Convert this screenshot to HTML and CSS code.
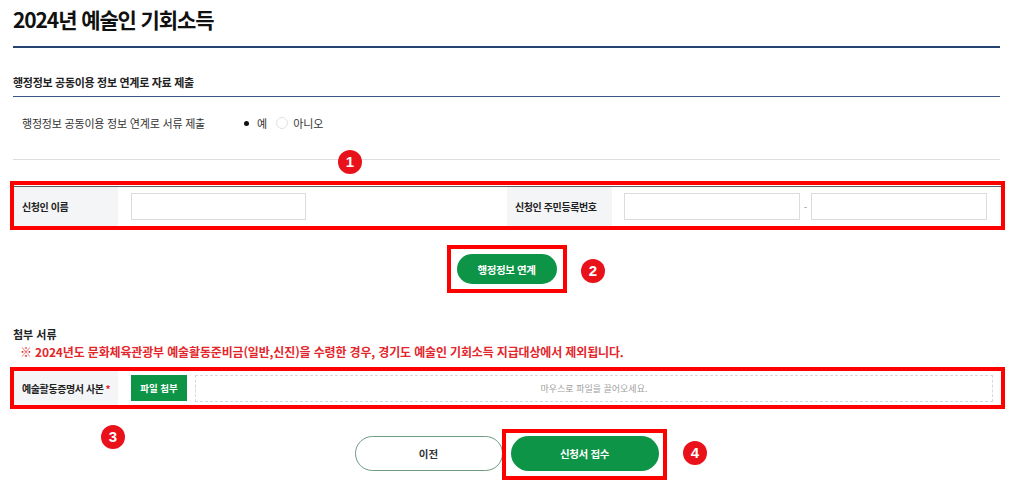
FILE: index.html
```html
<!DOCTYPE html>
<html lang="ko">
<head>
    <meta charset="UTF-8">
    <meta name="viewport" content="width=device-width, initial-scale=1.0">
    <title>2024년 예술인 기회소득</title>
    <link rel="stylesheet" href="styles.css">
</head>
<body>
    <div class="page">
        <h1 class="page-title">2024년 예술인 기회소득</h1>

        <h2 class="section-title">행정정보 공동이용 정보 연계로 자료 제출</h2>
        <div class="agree-row">
            <span class="agree-label">행정정보 공동이용 정보 연계로 서류 제출</span>
            <label class="radio checked"><span class="radio-mark"></span>예</label>
            <label class="radio"><span class="radio-mark"></span>아니오</label>
        </div>

        <div class="hl-box">
            <div class="form-row row-applicant">
                <div class="cell-label">신청인 이름</div>
                <div class="cell-input">
                    <input type="text" class="field">
                </div>
                <div class="cell-label">신청인 주민등록번호</div>
                <div class="cell-input cell-jumin">
                    <input type="text" class="field">
                    <span class="dash">-</span>
                    <input type="text" class="field">
                </div>
            </div>
        </div>

        <div class="center-row">
            <div class="hl-box hl-inline">
                <button class="btn-green btn-small">행정정보 연계</button>
            </div>
        </div>

        <h3 class="attach-title">첨부 서류</h3>
        <p class="notice">※ 2024년도 문화체육관광부 예술활동준비금(일반,신진)을 수령한 경우, 경기도 예술인 기회소득 지급대상에서 제외됩니다.</p>

        <div class="hl-box">
            <div class="form-row row-file">
                <div class="cell-label">예술활동증명서 사본 <span class="req">*</span></div>
                <div class="cell-file">
                    <button class="btn-file">파일 첨부</button>
                    <div class="drop-zone">마우스로 파일을 끌어오세요.</div>
                </div>
            </div>
        </div>

        <div class="bottom-btns">
            <button class="btn-outline">이전</button>
            <div class="hl-over">
                <button class="btn-green btn-big">신청서 접수</button>
            </div>
        </div>

        <span class="badge badge-1">1</span>
        <span class="badge badge-2">2</span>
        <span class="badge badge-3">3</span>
        <span class="badge badge-4">4</span>
    </div>
</body>
</html>
```

FILE: styles.css
```css
* {
    margin: 0;
    padding: 0;
    box-sizing: border-box;
}

body {
    font-family: "Noto Sans CJK KR", "Noto Sans", sans-serif;
    background: #fff;
    color: #222;
}

.page {
    position: relative;
    width: 1024px;
    padding: 0 24px 20px 13px;
}

.page-title {
    font-size: 21px;
    line-height: 30px;
    font-weight: 700;
    letter-spacing: -1.1px;
    color: #111;
    padding: 4px 0 12px;
    border-bottom: 2px solid #26436f;
}

.section-title {
    margin-top: 24px;
    font-size: 11px;
    line-height: 20px;
    font-weight: 700;
    letter-spacing: -0.3px;
    padding-bottom: 4px;
    border-bottom: 1px solid #3b5784;
}

.agree-row {
    display: flex;
    align-items: center;
    padding: 16px 0 26px 9px;
    border-bottom: 1px solid #ddd;
    font-size: 11px;
    line-height: 20px;
    color: #333;
}

.agree-label {
    width: 218px;
    letter-spacing: -0.2px;
}

.radio {
    display: flex;
    align-items: center;
    margin-right: 9px;
}

.radio-mark {
    width: 12px;
    height: 12px;
    border-radius: 50%;
    border: 1px solid #e2e2e2;
    margin-right: 5px;
    position: relative;
}

.radio.checked .radio-mark {
    border-color: #fff;
}

.radio.checked .radio-mark::after {
    content: "";
    position: absolute;
    left: 3px;
    top: 3px;
    width: 5px;
    height: 5px;
    border-radius: 50%;
    background: #111;
}

/* red highlight boxes */
.hl-box {
    border: 4px solid #ff0000;
    margin: 21px -5px 0 -3px;
    padding-top: 1px;
}

.hl-inline {
    display: inline-block;
    margin: 0;
    padding: 5px 6px;
}

.center-row {
    display: flex;
    justify-content: center;
    margin-top: 15px;
}

.form-row {
    display: grid;
    background: #fff;
}

.row-applicant {
    grid-template-columns: 104px minmax(0, 1fr) 105px minmax(0, 1fr);
    height: 40px;
    border-top: 1px solid #5a5f66;
}

.cell-label {
    background: #f4f5f7;
    display: flex;
    align-items: center;
    padding-left: 8px;
    font-size: 10px;
    font-weight: 700;
    letter-spacing: -0.4px;
    color: #222;
}

.cell-input {
    display: flex;
    align-items: center;
    padding-left: 13px;
    min-width: 0;
}

.cell-jumin {
    padding: 0 14px 0 12px;
}

.field {
    width: 175px;
    height: 27px;
    border: 1px solid #dcdcdc;
    background: #fff;
}

.cell-jumin .field {
    flex: 1;
    width: auto;
    min-width: 0;
}

.dash {
    width: 11px;
    text-align: center;
    font-size: 10px;
    color: #999;
}

.btn-green {
    background: #0d9446;
    color: #fff;
    border: none;
    font-family: inherit;
    font-weight: 700;
    letter-spacing: -0.4px;
}

.btn-small {
    display: block;
    width: 100px;
    height: 30px;
    border-radius: 15px;
    font-size: 10.5px;
}

.attach-title {
    margin-top: 32px;
    font-size: 11px;
    line-height: 18px;
    font-weight: 700;
    color: #222;
}

.notice {
    padding-left: 7px;
    font-size: 12px;
    line-height: 18px;
    font-weight: 700;
    letter-spacing: -0.15px;
    color: #e3262b;
}

.notice + .hl-box {
    margin-top: 6px;
    padding-top: 0;
}

.row-file {
    grid-template-columns: 104px minmax(0, 1fr);
    height: 34px;
}

.cell-file {
    display: flex;
    align-items: center;
    padding: 0 8px 0 13px;
    gap: 8px;
}

.btn-file {
    width: 56px;
    height: 26px;
    background: #0d9446;
    color: #fff;
    border: none;
    font-family: inherit;
    font-size: 9.5px;
    font-weight: 700;
}

.drop-zone {
    flex: 1;
    height: 27px;
    border: 1px dashed #d8d8d8;
    display: flex;
    align-items: center;
    justify-content: center;
    font-size: 9px;
    color: #a0a0a0;
}

.req {
    color: #e3262b;
    margin-left: 2px;
}

.bottom-btns {
    display: flex;
    justify-content: center;
    gap: 8px;
    margin-top: 27px;
}

.btn-outline,
.btn-big {
    width: 148px;
    height: 35px;
    border-radius: 18px;
    font-family: inherit;
    font-size: 10.5px;
    font-weight: 700;
}

.btn-outline {
    background: #fff;
    border: 1px solid #6f9c83;
    color: #333;
}

.btn-big {
    display: block;
}

.hl-over {
    position: relative;
}

.hl-over::after {
    content: "";
    position: absolute;
    left: -9px;
    right: -8px;
    top: -7px;
    bottom: -9px;
    border: 4px solid #ff0000;
}

/* numbered markers */
.badge {
    position: absolute;
    width: 24px;
    height: 24px;
    border-radius: 50%;
    background: #e9121b;
    color: #fff;
    font-family: "Liberation Sans", Arial, sans-serif;
    font-size: 15px;
    font-weight: 700;
    line-height: 24px;
    text-align: center;
}

.badge-1 { left: 338px; top: 150px; }
.badge-2 { left: 581px; top: 259px; }
.badge-3 { left: 101px; top: 425px; }
.badge-4 { left: 683px; top: 441px; }
```
